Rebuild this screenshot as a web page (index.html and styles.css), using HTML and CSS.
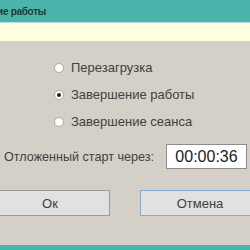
FILE: index.html
```html
<!DOCTYPE html>
<html lang="ru">
<head>
    <meta charset="UTF-8">
    <title>Завершение работы</title>
    <link rel="stylesheet" href="styles.css">
</head>
<body>
    <div class="dialog">
        <div class="titlebar">
            <div class="title-clip"><span class="title">Завершение работы</span></div>
        </div>
        <div class="notice"></div>

        <div class="options">
            <label class="option"><span class="radio"></span>Перезагрузка</label>
            <label class="option"><span class="radio checked"></span>Завершение работы</label>
            <label class="option"><span class="radio"></span>Завершение сеанса</label>
        </div>

        <div class="delay">
            <span class="delay-label">Отложенный старт через:</span>
            <div class="time-box">00:00:36</div>
        </div>

        <div class="button-group">
            <button class="btn">Ок</button>
            <button class="btn focused">Отмена</button>
        </div>

        <div class="bottom-bar"></div>
    </div>
</body>
</html>
```

FILE: styles.css
```css
body {
    margin: 0;
    width: 250px;
    height: 250px;
    overflow: hidden;
    background-color: #d4d0c8;
    font-family: "Liberation Sans", Arial, sans-serif;
    color: #404040;
}

.dialog {
    width: 250px;
    height: 250px;
    display: flex;
    flex-direction: column;
}

.titlebar {
    height: 22px;
    background-color: #4cb5ab;
    overflow: hidden;
}

.title-clip {
    width: 46px;
    height: 22px;
    display: flex;
    justify-content: flex-end;
    align-items: center;
}

.title {
    flex: none;
    white-space: nowrap;
    font-size: 10px;
    font-weight: bold;
    letter-spacing: -0.3px;
    color: #1e3b38;
}

.notice {
    height: 18px;
    border-top: 1px solid #b5e0d9;
    background-color: #ffffe0;
}

.options {
    margin-top: 13px;
    padding-left: 54px;
    display: flex;
    flex-direction: column;
}

.option {
    height: 27px;
    display: flex;
    align-items: center;
    gap: 7px;
    font-size: 13px;
}

.radio {
    width: 8px;
    height: 8px;
    border: 1px solid #a9a9a9;
    border-radius: 50%;
    background-color: #fff;
    display: flex;
    align-items: center;
    justify-content: center;
}

.radio.checked::after {
    content: "";
    width: 4px;
    height: 4px;
    border-radius: 50%;
    background-color: #222;
}

.delay {
    margin-top: 9px;
    padding-left: 4px;
    display: flex;
    align-items: center;
    gap: 11px;
}

.delay-label {
    flex: none;
    width: 151px;
    white-space: nowrap;
    font-size: 12.6px;
}

.time-box {
    flex: none;
    width: 79px;
    height: 23px;
    border: 1px solid #8c8c8c;
    background-color: #fff;
    font-size: 16px;
    line-height: 23px;
    text-align: center;
    color: #222;
}

.button-group {
    margin-top: 21px;
    margin-left: -10px;
    display: flex;
    gap: 30px;
}

.btn {
    flex: none;
    width: 120px;
    height: 26px;
    padding: 0;
    border: 1px solid #9a9a9a;
    background-color: #e1e1e1;
    font-family: "Liberation Sans", Arial, sans-serif;
    font-size: 13px;
    color: #404040;
}

.btn.focused {
    border-color: #7fa9d6;
}

.bottom-bar {
    margin-top: auto;
    height: 5px;
    background-color: #4cb5ab;
}
```
